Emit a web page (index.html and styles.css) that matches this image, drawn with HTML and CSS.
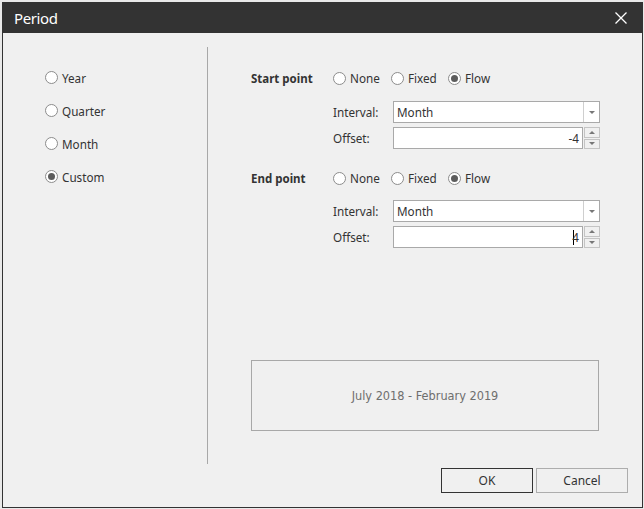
FILE: index.html
```html
<!DOCTYPE html>
<html>
<head>
<meta charset="utf-8">
<link rel="stylesheet" href="styles.css">
</head>
<body>
<div class="window">
  <div class="titlebar">
    <span class="title">Period</span>
    <span class="close">
      <svg width="12" height="12" viewBox="0 0 12 12"><path d="M0.5 0.5 L11.5 11.5 M11.5 0.5 L0.5 11.5" stroke="#ffffff" stroke-width="1.3" fill="none"/></svg>
    </span>
  </div>
  <div class="content">
    <div class="main">
      <div class="left">
        <div class="lrow"><span class="radio"></span><span>Year</span></div>
        <div class="lrow"><span class="radio"></span><span>Quarter</span></div>
        <div class="lrow"><span class="radio"></span><span>Month</span></div>
        <div class="lrow"><span class="radio on"></span><span>Custom</span></div>
      </div>
      <div class="sep"></div>
      <div class="right">
        <div class="prow">
          <span class="plabel">Start point</span>
          <span class="opt o1"><span class="radio"></span>None</span>
          <span class="opt o2"><span class="radio"></span>Fixed</span>
          <span class="opt"><span class="radio on"></span>Flow</span>
        </div>
        <div class="frow first">
          <span class="flabel">Interval:</span>
          <div class="select"><span class="val">Month</span><span class="drop"><span class="tri down"></span></span></div>
        </div>
        <div class="frow second">
          <span class="flabel">Offset:</span>
          <div class="spin"><span class="num">-4</span><span class="btns"><span class="sb"><span class="tri up"></span></span><span class="sb"><span class="tri down"></span></span></span></div>
        </div>
        <div class="prow endrow">
          <span class="plabel">End point</span>
          <span class="opt o1"><span class="radio"></span>None</span>
          <span class="opt o2"><span class="radio"></span>Fixed</span>
          <span class="opt"><span class="radio on"></span>Flow</span>
        </div>
        <div class="frow first2">
          <span class="flabel">Interval:</span>
          <div class="select"><span class="val">Month</span><span class="drop"><span class="tri down"></span></span></div>
        </div>
        <div class="frow second2">
          <span class="flabel">Offset:</span>
          <div class="spin"><span class="num"><span class="caret"></span>4</span><span class="btns"><span class="sb"><span class="tri up"></span></span><span class="sb"><span class="tri down"></span></span></span></div>
        </div>
        <div class="preview">July 2018 - February 2019</div>
      </div>
    </div>
    <div class="footer">
      <button class="btn ok">OK</button>
      <button class="btn">Cancel</button>
    </div>
  </div>
</div>
</body>
</html>
```

FILE: styles.css
```css
* { box-sizing: border-box; }
html, body { margin: 0; padding: 0; }
body {
  background: #e9e9e9;
  width: 644px;
  height: 509px;
  overflow: hidden;
  font-family: "Noto Sans", "Segoe UI", sans-serif;
  font-size: 11.7px;
  color: #333333;
}
.window {
  margin: 2px 0 0 2px;
  width: 641px;
  height: 506px;
  border: 1px solid #333333;
  background: #f0f0f0;
  display: flex;
  flex-direction: column;
}
.titlebar {
  height: 30px;
  background: #333333;
  color: #ffffff;
  display: flex;
  align-items: center;
  justify-content: space-between;
  padding: 0 15px 0 11px;
  flex: none;
}
.title {
  font-size: 15px;
  letter-spacing: -0.4px;
  margin-top: -1px;
}
.close { display: flex; margin-top: -1px; }
.content {
  flex: 1;
  display: flex;
  flex-direction: column;
}
.main {
  margin-top: 14px;
  height: 417px;
  display: flex;
}
.left {
  width: 204px;
  padding: 14px 0 0 42px;
}
.lrow {
  height: 33px;
  display: flex;
  align-items: center;
}
.radio {
  width: 13px;
  height: 13px;
  border-radius: 50%;
  border: 1px solid #8c8c8c;
  background: #ffffff;
  margin-right: 4px;
  flex: none;
  display: inline-flex;
  align-items: center;
  justify-content: center;
}
.radio.on::after {
  content: "";
  width: 7px;
  height: 7px;
  border-radius: 50%;
  background: #5c5c5c;
}
.sep {
  width: 1px;
  background: #a8a8a8;
}
.right {
  flex: 1;
  padding: 20px 0 0 43px;
  display: flex;
  flex-direction: column;
}
.prow {
  height: 22px;
  display: flex;
  align-items: center;
}
.plabel {
  width: 82px;
  font-weight: bold;
  font-size: 11.5px;
}
.opt {
  display: flex;
  align-items: center;
}
.o1 { width: 58px; }
.o2 { width: 57px; }
.frow {
  display: flex;
  align-items: center;
  padding-left: 82px;
}
.first { margin-top: 12px; }
.second { margin-top: 4px; }
.endrow { margin-top: 18px; }
.first2 { margin-top: 11px; }
.second2 { margin-top: 4px; }
.flabel { width: 60px; }
.select, .spin {
  width: 207px;
  height: 22px;
  display: flex;
}
.select {
  border: 1px solid #a9a9a9;
  background: #ffffff;
}
.val {
  flex: 1;
  padding-left: 3px;
  display: flex;
  align-items: center;
}
.drop {
  width: 16px;
  border-left: 1px solid #cfcfcf;
  display: flex;
  align-items: center;
  justify-content: center;
}
.tri {
  width: 0;
  height: 0;
  border-left: 3.5px solid transparent;
  border-right: 3.5px solid transparent;
}
.tri.down { border-top: 3.5px solid #777777; }
.tri.up { border-bottom: 3.5px solid #777777; }
.num {
  flex: 1;
  border: 1px solid #a9a9a9;
  background: #ffffff;
  display: flex;
  align-items: center;
  justify-content: flex-end;
  padding-right: 3px;
}
.caret {
  width: 1px;
  height: 15px;
  background: #000000;
  margin-right: -2px;
}
.btns {
  width: 16px;
  margin-left: 1px;
  display: flex;
  flex-direction: column;
  gap: 1px;
}
.sb {
  flex: 1;
  border: 1px solid #c4c4c4;
  background: #f0f0f0;
  display: flex;
  align-items: center;
  justify-content: center;
}
.preview {
  margin-top: 112px;
  width: 348px;
  height: 71px;
  border: 1px solid #a8a8a8;
  display: flex;
  align-items: center;
  justify-content: center;
  font-family: "DejaVu Sans", sans-serif;
  font-stretch: condensed;
  font-size: 12.6px;
  color: #6e6e6e;
}
.footer {
  display: flex;
  justify-content: flex-end;
  gap: 3px;
  padding: 4px 14px 0 0;
}
.btn {
  width: 92px;
  height: 25px;
  background: #f0f0f0;
  border: 1px solid #adadad;
  font-family: "Noto Sans", "Segoe UI", sans-serif;
  font-size: 12px;
  color: #333333;
  padding: 0;
}
.btn.ok { border-color: #333333; }
```
